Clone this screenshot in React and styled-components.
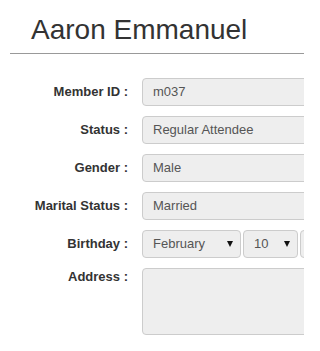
import React from "react";
import styled, { createGlobalStyle } from "styled-components";

const GlobalStyle = createGlobalStyle`
  html, body {
    margin: 0;
    padding: 0;
    overflow: hidden;
    background: #fff;
  }
  body {
    font-family: "Liberation Sans", Arial, sans-serif;
    color: #333;
  }
`;

const Page = styled.div`
  width: 304px;
  height: 351px;
  overflow: hidden;
`;

const Header = styled.div`
  margin: 15px 0 0 10px;
  padding: 0 0 7px 21px;
  border-bottom: 1px solid #999;
`;

const Title = styled.h1`
  margin: 0;
  font-size: 28px;
  font-weight: 400;
  line-height: 1.1;
  color: #333;
  white-space: nowrap;
`;

const Form = styled.div`
  margin-top: 24px;
  display: flex;
  flex-direction: column;
  gap: 10px;
`;

const Row = styled.div`
  display: grid;
  grid-template-columns: 128px 240px;
  column-gap: 14px;
  align-items: ${(p) => (p.$top ? "start" : "center")};
`;

const Label = styled.div`
  text-align: right;
  font-size: 13px;
  font-weight: 700;
  line-height: 18px;
  color: #333;
  white-space: nowrap;
`;

const Field = styled.div`
  box-sizing: border-box;
  height: ${(p) => p.$h || 28}px;
  padding: 0 10px;
  display: flex;
  align-items: center;
  justify-content: space-between;
  background: #eee;
  border: 1px solid #ccc;
  border-radius: 4px;
  font-size: 13px;
  color: #555;
  white-space: nowrap;
`;

const Selects = styled.div`
  display: flex;
  gap: 2px;
`;

const SelectBox = styled(Field)`
  width: ${(p) => p.$w}px;
  flex: none;
  padding: 0 7px 0 10px;
`;

const Arrow = styled.span`
  width: 0;
  height: 0;
  border-left: 3px solid transparent;
  border-right: 3px solid transparent;
  border-top: 6px solid #111;
`;

const rows = [
  ["Member ID :", "m037"],
  ["Status :", "Regular Attendee"],
  ["Gender :", "Male"],
  ["Marital Status :", "Married"],
];

export default function App() {
  return (
    <Page>
      <GlobalStyle />
      <Header>
        <Title>Aaron Emmanuel</Title>
      </Header>
      <Form>
        {rows.map(([label, value]) => (
          <Row key={label}>
            <Label>{label}</Label>
            <Field>{value}</Field>
          </Row>
        ))}
        <Row>
          <Label>Birthday :</Label>
          <Selects>
            <SelectBox $w={99}>
              February <Arrow />
            </SelectBox>
            <SelectBox $w={55}>
              10 <Arrow />
            </SelectBox>
            <SelectBox $w={80} />
          </Selects>
        </Row>
        <Row $top>
          <Label>Address :</Label>
          <Field $h={67} />
        </Row>
      </Form>
    </Page>
  );
}
